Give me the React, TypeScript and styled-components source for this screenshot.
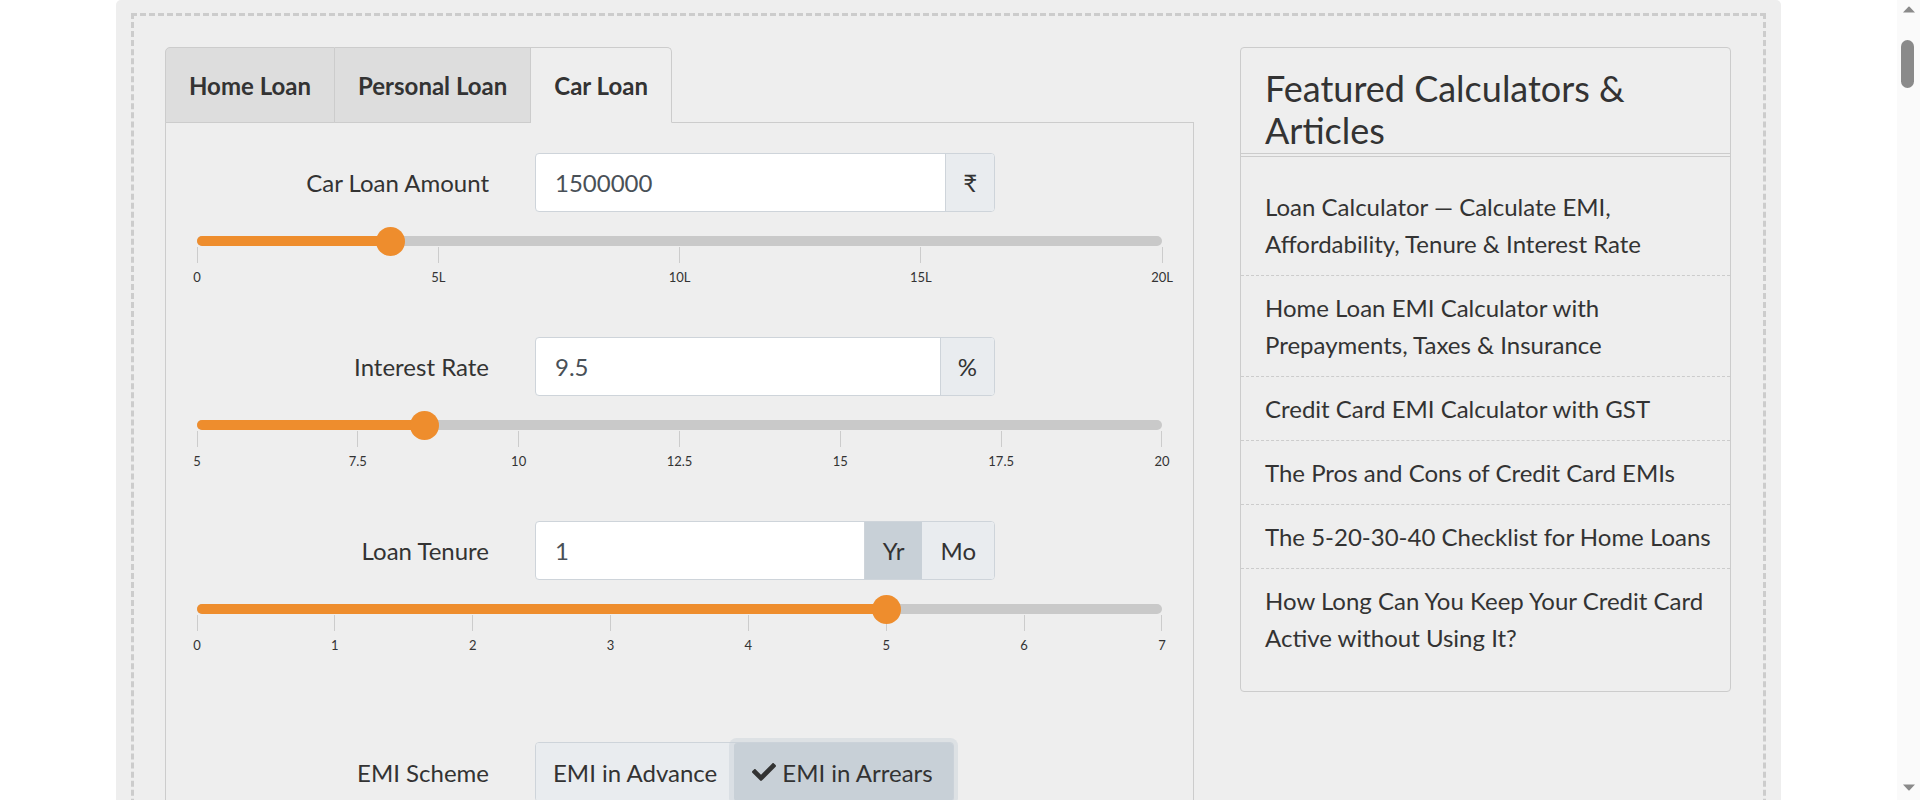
import React from 'react'
import styled, { createGlobalStyle } from 'styled-components'
import { FaCheck } from 'react-icons/fa'

const PANEL_BG = '#eeeeee'
const TAB_BG = '#dddddd'
const LINE = '#cccccc'
const INPUT_LINE = '#ced4da'
const ADDON_BG = '#e9ecef'
const ADDON_ACTIVE = '#c8d0d7'
const ORANGE = '#ee8d2d'
const TRACK = '#c9c9c9'
const TEXT = '#333333'
const SCROLL_GREY = '#8a8a8a'

const GlobalStyle = createGlobalStyle`
  html, body {
    margin: 0;
    padding: 0;
    background: #ffffff;
  }
  body {
    font-family: Lato, "Noto Sans", "DejaVu Sans", sans-serif;
    color: ${TEXT};
  }
  * {
    box-sizing: border-box;
  }
`

interface Addon {
  text: string
  active?: boolean
  toggle?: boolean
}

interface Field {
  label: string
  value: string
  addons: Addon[]
  pos: number
  ticks: string[]
}

const fields: Field[] = [
  {
    label: 'Car Loan Amount',
    value: '1500000',
    addons: [{ text: '₹' }],
    pos: 20.1,
    ticks: ['0', '5L', '10L', '15L', '20L'],
  },
  {
    label: 'Interest Rate',
    value: '9.5',
    addons: [{ text: '%' }],
    pos: 23.6,
    ticks: ['5', '7.5', '10', '12.5', '15', '17.5', '20'],
  },
  {
    label: 'Loan Tenure',
    value: '1',
    addons: [
      { text: 'Yr', active: true, toggle: true },
      { text: 'Mo', toggle: true },
    ],
    pos: 71.5,
    ticks: ['0', '1', '2', '3', '4', '5', '6', '7'],
  },
]

const articles = [
  'Loan Calculator — Calculate EMI, Affordability, Tenure & Interest Rate',
  'Home Loan EMI Calculator with Prepayments, Taxes & Insurance',
  'Credit Card EMI Calculator with GST',
  'The Pros and Cons of Credit Card EMIs',
  'The 5-20-30-40 Checklist for Home Loans',
  'How Long Can You Keep Your Credit Card Active without Using It?',
]

const tabs = ['Home Loan', 'Personal Loan', 'Car Loan']

// leaves room for the scroll rail on the right
const Page = styled.div`
  padding-right: 23px;
`

// the page continues far below the fold, hence the tall panel
const Panel = styled.div`
  width: 1665px;
  min-height: 19800px;
  margin: 0 auto;
  padding: 13px 15px;
  background: ${PANEL_BG};
  border-radius: 5px;
`

const DashedBox = styled.div`
  border: 3px dashed ${LINE};
  padding: 31px;
  display: flex;
  align-items: flex-start;
  gap: 46px;
`

const CalcColumn = styled.div`
  width: 1029px;
  flex: none;
`

const TabList = styled.div`
  display: flex;
  border-bottom: 1px solid ${LINE};
`

const Tab = styled.div<{ active: boolean }>`
  height: 76px;
  margin-bottom: -1px;
  padding: 0 23px;
  display: flex;
  align-items: center;
  font-size: 24px;
  font-weight: 700;
  color: ${TEXT};
  background: ${(p) => (p.active ? PANEL_BG : TAB_BG)};
  border: 1px solid ${LINE};
  border-bottom-color: ${(p) => (p.active ? PANEL_BG : LINE)};
  cursor: pointer;

  & + & {
    border-left: none;
  }
  &:first-child {
    border-top-left-radius: 5px;
  }
  &:last-child {
    border-top-right-radius: 5px;
  }
`

const TabContent = styled.div`
  border: 1px solid ${LINE};
  border-top: none;
  padding: 30px 31px 40px;
`

const FieldBlock = styled.div`
  margin-bottom: 52px;
`

const FieldRow = styled.div<{ pushed?: boolean }>`
  display: grid;
  grid-template-columns: 338px 460px;
  align-items: center;
  margin-top: ${(p) => (p.pushed ? '89px' : '0')};
`

const Label = styled.label`
  text-align: right;
  padding-right: 46px;
  font-size: 24px;
  color: ${TEXT};
`

const InputGroup = styled.div`
  display: flex;
  height: 59px;
  border: 1px solid ${INPUT_LINE};
  border-radius: 4px;
  overflow: hidden;
  background: #ffffff;
`

const TextInput = styled.input`
  flex: 1;
  min-width: 0;
  border: none;
  outline: none;
  padding: 0 19px;
  font-family: inherit;
  font-size: 24px;
  color: #495057;
  background: transparent;
`

const AddonBox = styled.span<{ active?: boolean; first?: boolean; toggle?: boolean }>`
  display: flex;
  align-items: center;
  padding: ${(p) => (p.toggle ? '0 18px' : '0 17px')};
  font-size: 24px;
  color: ${TEXT};
  background: ${(p) => (p.active ? ADDON_ACTIVE : ADDON_BG)};
  border-left: ${(p) => (p.first ? `1px solid ${INPUT_LINE}` : 'none')};
  cursor: ${(p) => (p.toggle ? 'pointer' : 'default')};
`

const SliderBox = styled.div`
  margin-top: 24px;
`

const Track = styled.div`
  position: relative;
  height: 10px;
  border-radius: 5px;
  background: ${TRACK};
`

const Fill = styled.div`
  height: 100%;
  border-radius: 5px;
  background: ${ORANGE};
`

const Thumb = styled.div`
  position: absolute;
  top: 50%;
  width: 29px;
  height: 29px;
  margin: -14.5px 0 0 -14.5px;
  border-radius: 50%;
  background: ${ORANGE};
`

const Scale = styled.div`
  display: flex;
  justify-content: space-between;
  margin-top: 1px;
`

const TickItem = styled.div`
  width: 0;
  display: flex;
  flex-direction: column;
  align-items: center;
`

const TickMark = styled.span`
  width: 1px;
  height: 16px;
  background: ${LINE};
`

const TickLabel = styled.span`
  margin-top: 6px;
  font-size: 13px;
  line-height: 16px;
  white-space: nowrap;
  color: ${TEXT};
`

const ButtonGroup = styled.div`
  display: flex;
  height: 60px;
  width: fit-content;
  border: 1px solid ${INPUT_LINE};
  border-radius: 4px;
`

const ToggleButton = styled.button<{ active: boolean }>`
  display: flex;
  align-items: center;
  gap: 6px;
  padding: ${(p) => (p.active ? '0 20px 0 18px' : '0 17px')};
  border: none;
  font-family: inherit;
  font-size: 24px;
  color: ${TEXT};
  background: ${(p) => (p.active ? ADDON_ACTIVE : ADDON_BG)};
  box-shadow: ${(p) =>
    p.active ? '0 0 0 5px rgba(200, 208, 215, 0.45)' : 'none'};
  &:first-child {
    border-radius: 3px 0 0 3px;
  }
  &:last-child {
    border-radius: 3px;
  }
`

const Card = styled.aside`
  width: 491px;
  flex: none;
  border: 1px solid ${LINE};
  border-radius: 4px;
  background: ${PANEL_BG};
`

const CardTitle = styled.h3`
  margin: 0;
  padding: 19px 24px 2px;
  font-size: 36px;
  line-height: 42px;
  font-weight: 400;
  color: ${TEXT};
  border-bottom: 1px solid ${LINE};
`

const ArticleList = styled.ul`
  list-style: none;
  margin: 2px 0 0;
  padding: 18px 0 22px;
  border-top: 1px solid ${LINE};
`

const ArticleItem = styled.li`
  padding: 13px 12px 13px 24px;
  font-size: 24px;
  line-height: 37px;
  color: ${TEXT};
  border-bottom: 1px dashed ${LINE};
  &:last-child {
    border-bottom: none;
  }
`

const ScrollRail = styled.div`
  position: fixed;
  top: 0;
  right: 0;
  bottom: 0;
  width: 23px;
  background: #fafafa;
  display: flex;
  flex-direction: column;
  align-items: center;
  justify-content: space-between;
  padding: 6px 0 9px;
`

const ScrollThumb = styled.div`
  position: absolute;
  top: 40px;
  left: 4px;
  width: 13px;
  height: 48px;
  border-radius: 7px;
  background: ${SCROLL_GREY};
`

const Slider = ({ pos, ticks }: { pos: number; ticks: string[] }) => (
  <SliderBox>
    <Track>
      <Fill style={{ width: `${pos}%` }} />
      <Thumb style={{ left: `${pos}%` }} />
    </Track>
    <Scale>
      {ticks.map((t) => (
        <TickItem key={t}>
          <TickMark />
          <TickLabel>{t}</TickLabel>
        </TickItem>
      ))}
    </Scale>
  </SliderBox>
)

const Arrow = ({ down }: { down?: boolean }) => (
  <svg width="14" height="7" viewBox="0 0 14 7">
    <path
      d={down ? 'M1 0.5 H13 L7.6 6.3 Q7 6.9 6.4 6.3 Z' : 'M1 6.5 H13 L7.6 0.7 Q7 0.1 6.4 0.7 Z'}
      fill={SCROLL_GREY}
    />
  </svg>
)

export default function App() {
  return (
    <Page>
      <GlobalStyle />
      <Panel>
        <DashedBox>
          <CalcColumn>
            <TabList>
              {tabs.map((t) => (
                <Tab key={t} active={t === 'Car Loan'}>
                  {t}
                </Tab>
              ))}
            </TabList>
            <TabContent>
              {fields.map((f) => (
                <FieldBlock key={f.label}>
                  <FieldRow>
                    <Label>{f.label}</Label>
                    <InputGroup>
                      <TextInput defaultValue={f.value} />
                      {f.addons.map((a, i) => (
                        <AddonBox
                          key={a.text}
                          active={a.active}
                          toggle={a.toggle}
                          first={i === 0}
                        >
                          {a.text}
                        </AddonBox>
                      ))}
                    </InputGroup>
                  </FieldRow>
                  <Slider pos={f.pos} ticks={f.ticks} />
                </FieldBlock>
              ))}
              <FieldRow pushed>
                <Label>EMI Scheme</Label>
                <ButtonGroup>
                  <ToggleButton active={false}>EMI in Advance</ToggleButton>
                  <ToggleButton active>
                    <FaCheck size={24} />
                    EMI in Arrears
                  </ToggleButton>
                </ButtonGroup>
              </FieldRow>
            </TabContent>
          </CalcColumn>
          <Card>
            <CardTitle>Featured Calculators &amp; Articles</CardTitle>
            <ArticleList>
              {articles.map((a) => (
                <ArticleItem key={a}>{a}</ArticleItem>
              ))}
            </ArticleList>
          </Card>
        </DashedBox>
      </Panel>
      <ScrollRail>
        <Arrow />
        <ScrollThumb />
        <Arrow down />
      </ScrollRail>
    </Page>
  )
}
